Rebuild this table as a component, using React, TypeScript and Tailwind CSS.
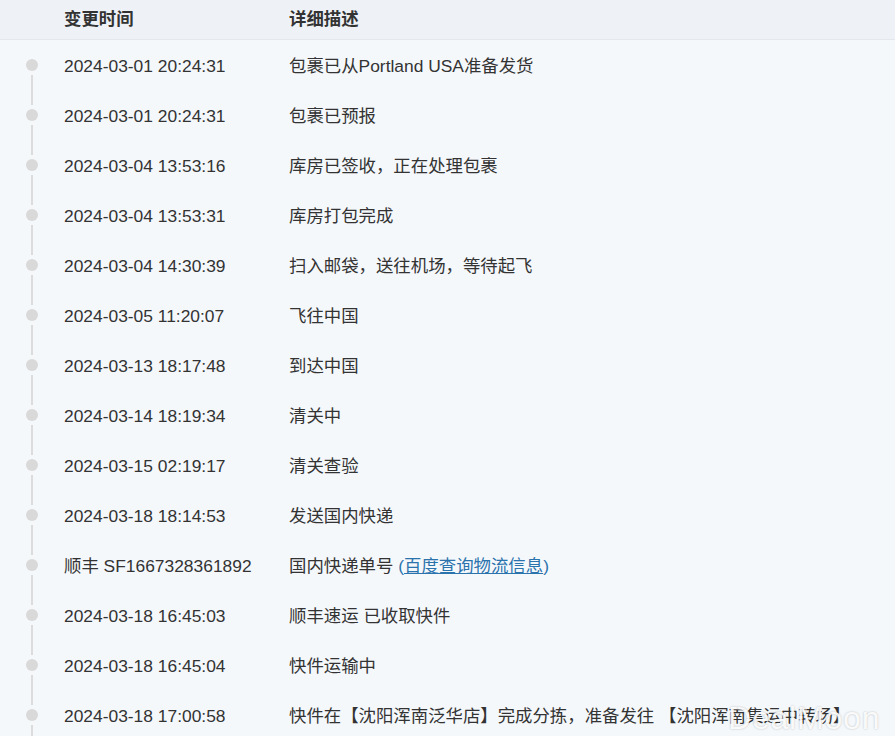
import React from "react";

const rows: { t: string; d: React.ReactNode }[] = [
  { t: "2024-03-01 20:24:31", d: "包裹已从Portland USA准备发货" },
  { t: "2024-03-01 20:24:31", d: "包裹已预报" },
  { t: "2024-03-04 13:53:16", d: "库房已签收，正在处理包裹" },
  { t: "2024-03-04 13:53:31", d: "库房打包完成" },
  { t: "2024-03-04 14:30:39", d: "扫入邮袋，送往机场，等待起飞" },
  { t: "2024-03-05 11:20:07", d: "飞往中国" },
  { t: "2024-03-13 18:17:48", d: "到达中国" },
  { t: "2024-03-14 18:19:34", d: "清关中" },
  { t: "2024-03-15 02:19:17", d: "清关查验" },
  { t: "2024-03-18 18:14:53", d: "发送国内快递" },
  {
    t: "顺丰 SF1667328361892",
    d: (
      <>
        国内快递单号{" "}
        <span className="text-[#2b73ad]">
          (<span className="underline">百度查询物流信息</span>)
        </span>
      </>
    ),
  },
  { t: "2024-03-18 16:45:03", d: "顺丰速运 已收取快件" },
  { t: "2024-03-18 16:45:04", d: "快件运输中" },
  {
    t: "2024-03-18 17:00:58",
    d: "快件在【沈阳浑南泛华店】完成分拣，准备发往 【沈阳浑南集运中转场】",
  },
];

export default function App() {
  return (
    <div
      className="relative w-[895px] h-[736px] overflow-hidden bg-[#f5f8fb] text-[#333] text-[17.4px]"
      style={{ fontFamily: '"Liberation Sans", Arial, "Noto Sans CJK SC", sans-serif' }}
    >
      <div className="flex h-[40px] items-center bg-[#eef2f6] border-b border-[#e3e8ee] font-bold">
        <div className="w-[64px] shrink-0" />
        <div className="w-[225px] shrink-0">变更时间</div>
        <div>详细描述</div>
      </div>
      {rows.map((r, i) => (
        <div key={i} className="flex h-[50px] items-center whitespace-nowrap">
          <div className="w-[64px] shrink-0 h-full flex flex-col items-center">
            <div className={`w-[2px] h-[15px] ${i === 0 ? "" : "bg-[#dcdcdc]"}`} />
            <div className="w-[12px] h-[12px] mt-[4px] rounded-full bg-[#d9d9d9]" />
            <div className="w-[2px] flex-1 mt-[4px] bg-[#dcdcdc]" />
          </div>
          <div className="w-[225px] shrink-0 pt-[2px]">{r.t}</div>
          <div className="pt-[2px]">{r.d}</div>
        </div>
      ))}
      <div
        className="absolute left-[728px] top-[694px] text-[32px] text-white/90 tracking-wide"
        style={{ textShadow: "0 0 2px rgba(0,0,0,0.25)" }}
      >
        DealMoon
      </div>
    </div>
  );
}
